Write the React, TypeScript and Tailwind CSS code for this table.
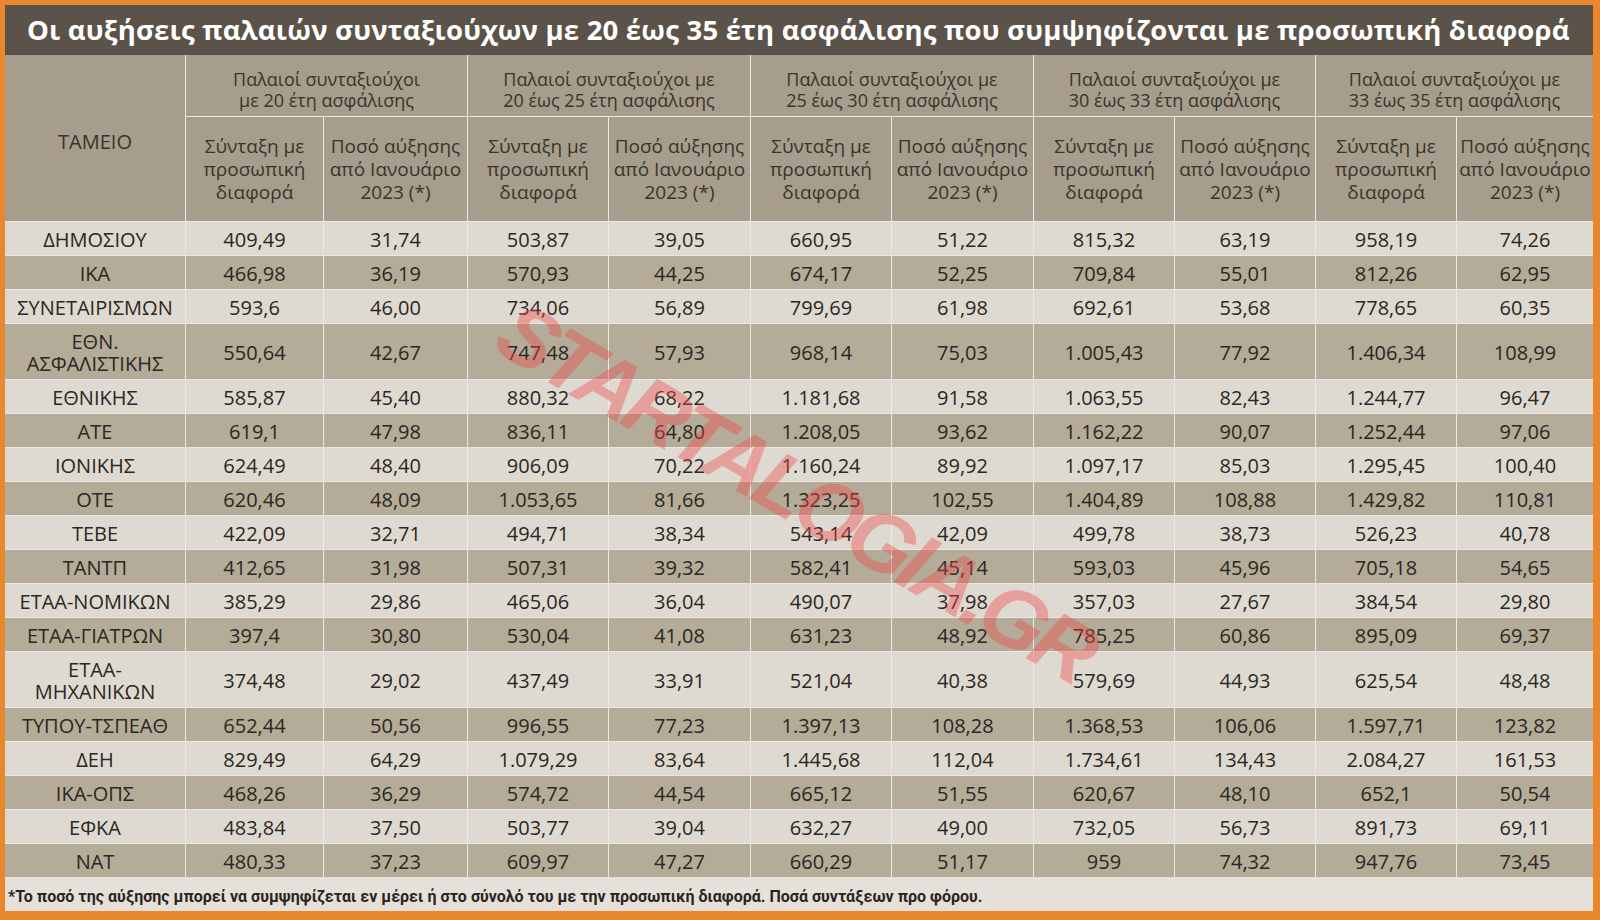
import React from "react";

const rows: string[][] = [
  ["ΔΗΜΟΣΙΟΥ", "409,49", "31,74", "503,87", "39,05", "660,95", "51,22", "815,32", "63,19", "958,19", "74,26"],
  ["ΙΚΑ", "466,98", "36,19", "570,93", "44,25", "674,17", "52,25", "709,84", "55,01", "812,26", "62,95"],
  ["ΣΥΝΕΤΑΙΡΙΣΜΩΝ", "593,6", "46,00", "734,06", "56,89", "799,69", "61,98", "692,61", "53,68", "778,65", "60,35"],
  ["ΕΘΝ.\nΑΣΦΑΛΙΣΤΙΚΗΣ", "550,64", "42,67", "747,48", "57,93", "968,14", "75,03", "1.005,43", "77,92", "1.406,34", "108,99"],
  ["ΕΘΝΙΚΗΣ", "585,87", "45,40", "880,32", "68,22", "1.181,68", "91,58", "1.063,55", "82,43", "1.244,77", "96,47"],
  ["ΑΤΕ", "619,1", "47,98", "836,11", "64,80", "1.208,05", "93,62", "1.162,22", "90,07", "1.252,44", "97,06"],
  ["ΙΟΝΙΚΗΣ", "624,49", "48,40", "906,09", "70,22", "1.160,24", "89,92", "1.097,17", "85,03", "1.295,45", "100,40"],
  ["ΟΤΕ", "620,46", "48,09", "1.053,65", "81,66", "1.323,25", "102,55", "1.404,89", "108,88", "1.429,82", "110,81"],
  ["ΤΕΒΕ", "422,09", "32,71", "494,71", "38,34", "543,14", "42,09", "499,78", "38,73", "526,23", "40,78"],
  ["ΤΑΝΤΠ", "412,65", "31,98", "507,31", "39,32", "582,41", "45,14", "593,03", "45,96", "705,18", "54,65"],
  ["ΕΤΑΑ-ΝΟΜΙΚΩΝ", "385,29", "29,86", "465,06", "36,04", "490,07", "37,98", "357,03", "27,67", "384,54", "29,80"],
  ["ΕΤΑΑ-ΓΙΑΤΡΩΝ", "397,4", "30,80", "530,04", "41,08", "631,23", "48,92", "785,25", "60,86", "895,09", "69,37"],
  ["ΕΤΑΑ-\nΜΗΧΑΝΙΚΩΝ", "374,48", "29,02", "437,49", "33,91", "521,04", "40,38", "579,69", "44,93", "625,54", "48,48"],
  ["ΤΥΠΟΥ-ΤΣΠΕΑΘ", "652,44", "50,56", "996,55", "77,23", "1.397,13", "108,28", "1.368,53", "106,06", "1.597,71", "123,82"],
  ["ΔΕΗ", "829,49", "64,29", "1.079,29", "83,64", "1.445,68", "112,04", "1.734,61", "134,43", "2.084,27", "161,53"],
  ["ΙΚΑ-ΟΠΣ", "468,26", "36,29", "574,72", "44,54", "665,12", "51,55", "620,67", "48,10", "652,1", "50,54"],
  ["ΕΦΚΑ", "483,84", "37,50", "503,77", "39,04", "632,27", "49,00", "732,05", "56,73", "891,73", "69,11"],
  ["ΝΑΤ", "480,33", "37,23", "609,97", "47,27", "660,29", "51,17", "959", "74,32", "947,76", "73,45"],
];

const groups: [string, string][] = [
  ["Παλαιοί συνταξιούχοι", "με 20 έτη ασφάλισης"],
  ["Παλαιοί συνταξιούχοι με", "20 έως 25 έτη ασφάλισης"],
  ["Παλαιοί συνταξιούχοι με", "25 έως 30 έτη ασφάλισης"],
  ["Παλαιοί συνταξιούχοι με", "30 έως 33 έτη ασφάλισης"],
  ["Παλαιοί συνταξιούχοι με", "33 έως 35 έτη ασφάλισης"],
];

export default function App() {
  return (
    <div
      className="w-[1600px] h-[920px] bg-[#e8872b] pl-[5px] pt-[5px] pr-[7px] pb-[9px] overflow-hidden"
      style={{ fontFamily: '"Open Sans", "Noto Sans", sans-serif' }}
    >
      <div className="flex flex-col h-full bg-[#e5e1da]">
        <div className="h-[50px] shrink-0 bg-[#5b534a] flex items-center pl-[22px] text-white font-bold text-[27.5px] whitespace-nowrap tracking-[0.2px]">
          Οι αυξήσεις παλαιών συνταξιούχων με 20 έως 35 έτη ασφάλισης που συμψηφίζονται με προσωπική διαφορά
        </div>
        <div className="relative shrink-0 overflow-hidden">
          <div className="grid grid-cols-[180px_137px_143px_140px_141px_140px_141px_140px_140px_140px_136px] grid-rows-[61px_104px_repeat(3,33px)_55px_repeat(8,33px)_55px_repeat(5,33px)] gap-px bg-[#ece8e1] text-[#2b2722]">
            <div className="row-span-2 bg-[#a69d8c] flex justify-center pt-[72px] text-[20px] text-[#3a342d]">
              ΤΑΜΕΙΟ
            </div>
            {groups.map((g, i) => (
              <div
                key={"g" + i}
                className="col-span-2 bg-[#a69d8c] flex flex-col items-center justify-center pt-[8px] text-[18px] leading-[21px] text-[#3a342d] whitespace-nowrap"
              >
                <span>{g[0]}</span>
                <span>{g[1]}</span>
              </div>
            ))}
            {groups.map((_, i) => (
              <React.Fragment key={"s" + i}>
                <div className="bg-[#a69d8c] flex flex-col items-center justify-center text-[19px] leading-[23px] text-[#3a342d] whitespace-nowrap">
                  <span>Σύνταξη με</span>
                  <span>προσωπική</span>
                  <span>διαφορά</span>
                </div>
                <div className="bg-[#a69d8c] flex flex-col items-center justify-center text-[19px] leading-[23px] text-[#3a342d] whitespace-nowrap overflow-hidden">
                  <span>Ποσό αύξησης</span>
                  <span>από Ιανουάριο</span>
                  <span>2023 (*)</span>
                </div>
              </React.Fragment>
            ))}
            {rows.map((r, ri) => {
              const bg = ri % 2 === 0 ? "bg-[#dedad2]" : "bg-[#b4ab98]";
              return r.map((c, ci) => (
                <div
                  key={ri + "-" + ci}
                  className={
                    bg +
                    " flex flex-col items-center justify-center pt-[2px] text-[20px] leading-[22px] whitespace-nowrap"
                  }
                >
                  {c.split("\n").map((l, li) => (
                    <span key={li}>{l}</span>
                  ))}
                </div>
              ));
            })}
          </div>
          <div
            className="pointer-events-none absolute left-[455px] top-[395px] rotate-[30deg] text-[84px] font-black italic tracking-[-5px] text-[#f04848]/40 whitespace-nowrap leading-none"
            style={{ fontFamily: '"Liberation Sans", sans-serif' }}
          >
            STARTALOGIA.GR
          </div>
        </div>
        <div
          className="flex-1 flex items-center pl-[3px] pt-[6px] text-[16px] font-bold text-[#2a2520] whitespace-nowrap"
          style={{ fontFamily: 'Roboto, "Noto Sans", sans-serif' }}
        >
          *Το ποσό της αύξησης μπορεί να συμψηφίζεται εν μέρει ή στο σύνολό του με την προσωπική διαφορά. Ποσά συντάξεων προ φόρου.
        </div>
      </div>
    </div>
  );
}
